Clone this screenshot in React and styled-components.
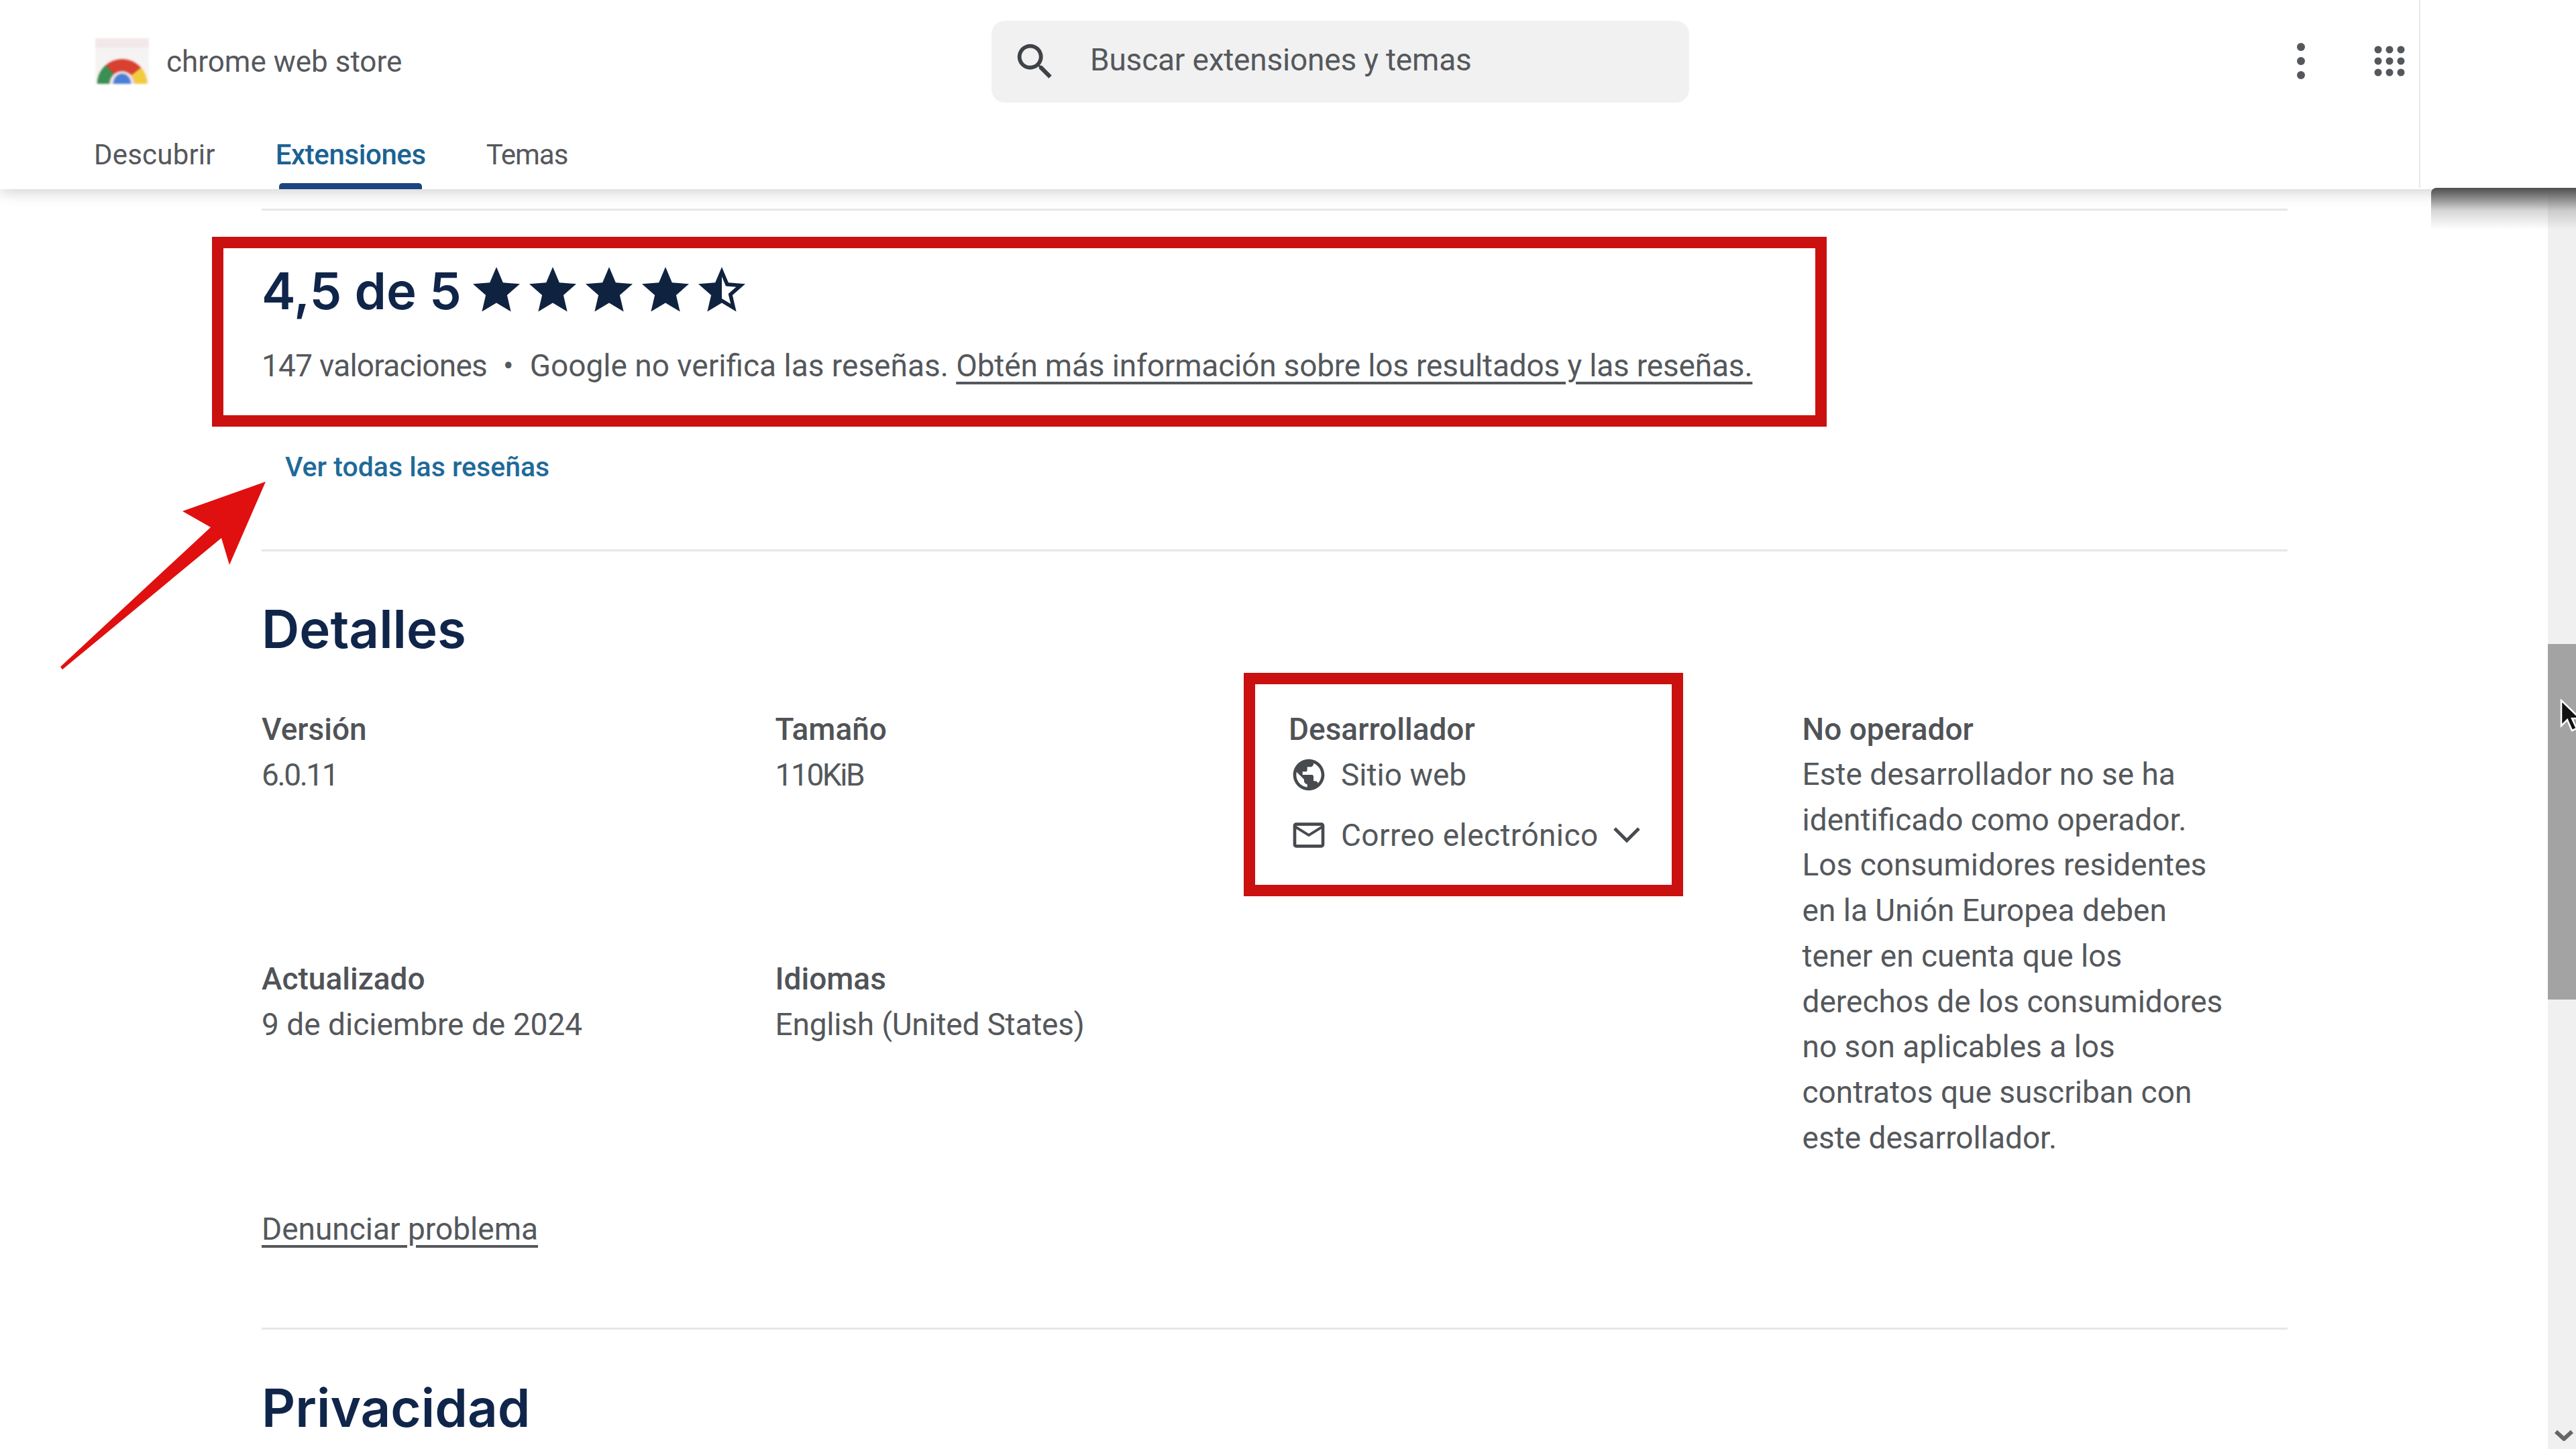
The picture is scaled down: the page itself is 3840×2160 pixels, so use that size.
import styled, { createGlobalStyle } from 'styled-components'

const GlobalStyle = createGlobalStyle`
html, body {
  margin: 0;
  padding: 0;
  background: #fff;
  overflow: hidden;
}
* { box-sizing: border-box; }
`

const STAR = 'M12 17.27L18.18 21l-1.64-7.03L22 9.24l-7.19-.61L12 2 9.19 8.63 2 9.24l5.46 4.73L5.82 21z'
const STAR_HALF = 'M22 9.24l-7.19-.62L12 2 9.19 8.63 2 9.24l5.46 4.73L5.82 21 12 17.27 18.18 21l-1.63-7.03L22 9.24zM12 15.4V6.1l1.71 4.04 4.38.38-3.32 2.88 1 4.28L12 15.4z'
const GLOBE = 'M12 2C6.48 2 2 6.48 2 12s4.48 10 10 10 10-4.48 10-10S17.52 2 12 2zm-1 17.93c-3.95-.49-7-3.85-7-7.93 0-.62.08-1.21.21-1.79L9 15v1c0 1.1.9 2 2 2v1.93zm6.9-2.54c-.26-.81-1-1.39-1.9-1.39h-1v-3c0-.55-.45-1-1-1H8v-2h2c.55 0 1-.45 1-1V7h2c1.1 0 2-.9 2-2v-.41c2.93 1.19 5 4.06 5 7.41 0 2.08-.8 3.97-2.1 5.39z'
const MAIL = 'M20 4H4c-1.1 0-1.99.9-1.99 2L2 18c0 1.1.9 2 2 2h16c1.1 0 2-.9 2-2V6c0-1.1-.9-2-2-2zm0 14H4V8l8 5 8-5v10zm-8-7L4 6h16l-8 5z'
const SEARCH = 'M15.5 14h-.79l-.28-.27A6.47 6.47 0 0 0 16 9.5 6.5 6.5 0 1 0 9.5 16c1.61 0 3.09-.59 4.23-1.57l.27.28v.79l5 4.99L20.49 19l-4.99-5zm-6 0C7.01 14 5 11.99 5 9.5S7.01 5 9.5 5 14 7.01 14 9.5 11.99 14 9.5 14z'

const Logo = () => (
    <LogoSvg viewBox="0 0 84 74">
        <path d="M2 2h80v68H2z" fill="#f6f3f3" />
        <path d="M2 2h80v14H2z" fill="#f2e8ea" />
        <path d="M5 70a37 37 0 0 1 74 0z" fill="#d8402f" />
        <path d="M5 70a37 37 0 0 1 13-28l12 14a18 18 0 0 0-7 14z" fill="#3a8f52" />
        <path d="M79 70a37 37 0 0 0-9-24l-14 11a18 18 0 0 1 5 13z" fill="#f2cc3c" />
        <path d="M23 70a19 19 0 0 1 38 0z" fill="#ecdfe6" />
        <path d="M29 70a13 15 0 0 1 26 0z" fill="#4a7fd6" />
    </LogoSvg>
)

const Icon = ({ d, size, color }) => (
    <svg width={size} height={size} viewBox="0 0 24 24" fill={color}><path d={d} /></svg>
)

const App = () => {
    return (
        <Page>
            <GlobalStyle />
            <Main>
                <Header>
                    <TopRow>
                        <Brand>
                            <Logo />
                            <BrandName>chrome web store</BrandName>
                        </Brand>
                        <SearchBox>
                            <Icon d={SEARCH} size={70} color="#3f4246" />
                            <SearchText>Buscar extensiones y temas</SearchText>
                        </SearchBox>
                        <Actions>
                            <svg width="14" height="56" viewBox="0 0 14 56" fill="#54575b">
                                <circle cx="7" cy="7" r="6" />
                                <circle cx="7" cy="28" r="6" />
                                <circle cx="7" cy="49" r="6" />
                            </svg>
                            <svg width="46" height="46" viewBox="0 0 46 46" fill="#54575b">
                                {[6, 23, 40].map(y => [6, 23, 40].map(x => (
                                    <circle key={`${x}-${y}`} cx={x} cy={y} r="5.5" />
                                )))}
                            </svg>
                        </Actions>
                    </TopRow>
                    <Tabs>
                        <Tab $spacing="0.2px">Descubrir</Tab>
                        <Tab $active $spacing="-0.4px">Extensiones<Indicator /></Tab>
                        <Tab $spacing="-1px">Temas</Tab>
                    </Tabs>
                </Header>
                <Content>
                    <Divider $top="29px" />
                    <RatingRow>
                        <RatingTitle>4,5 de 5</RatingTitle>
                        <Stars>
                            <Icon d={STAR} size={84} color="#0f2340" />
                            <Icon d={STAR} size={84} color="#0f2340" />
                            <Icon d={STAR} size={84} color="#0f2340" />
                            <Icon d={STAR} size={84} color="#0f2340" />
                            <Icon d={STAR_HALF} size={84} color="#0f2340" />
                        </Stars>
                    </RatingRow>
                    <RatingNote>
                        <Count>147 valoraciones</Count><Dot>•</Dot>Google no verifica las reseñas. <TextLink>Obtén más información sobre los resultados y las reseñas.</TextLink>
                    </RatingNote>
                    <AllReviews>Ver todas las reseñas</AllReviews>
                    <Divider $top="93px" />
                    <SectionTitle $top="66px">Detalles</SectionTitle>
                    <DetailsGrid>
                        <Detail>
                            <Label>Versión</Label>
                            <Value $spacing="-2.4px">6.0.11</Value>
                        </Detail>
                        <Detail>
                            <Label>Tamaño</Label>
                            <Value $spacing="-2.4px">110KiB</Value>
                        </Detail>
                        <Detail>
                            <Label>Desarrollador</Label>
                            <IconRow>
                                <Icon d={GLOBE} size={56} color="#474a4e" />
                                <span>Sitio web</span>
                            </IconRow>
                            <IconRow $top="22px">
                                <Icon d={MAIL} size={56} color="#474a4e" />
                                <MailText>Correo electrónico</MailText>
                                <svg width="44" height="28" viewBox="0 0 44 28" fill="none" stroke="#474a4e" strokeWidth="5">
                                    <path d="M4 4l18 18L40 4" />
                                </svg>
                            </IconRow>
                        </Detail>
                        <OperatorDetail>
                            <Label>No operador</Label>
                            <OperatorText>Este desarrollador no se ha identificado como operador. Los consumidores residentes en la Unión Europea deben tener en cuenta que los derechos de los consumidores no son aplicables a los contratos que suscriban con este desarrollador.</OperatorText>
                        </OperatorDetail>
                        <Detail>
                            <Label>Actualizado</Label>
                            <Value>9 de diciembre de 2024</Value>
                        </Detail>
                        <Detail>
                            <Label>Idiomas</Label>
                            <Value $spacing="-0.2px">English (United States)</Value>
                        </Detail>
                    </DetailsGrid>
                    <ReportLink>Denunciar problema</ReportLink>
                    <Divider $top="113px" />
                    <SectionTitle $top="67px">Privacidad</SectionTitle>
                </Content>
            </Main>
            <Scrollbar>
                <Thumb />
                <ScrollArrow viewBox="0 0 28 16" fill="none" stroke="#666" strokeWidth="6">
                    <path d="M2 2l12 11L26 2" />
                </ScrollArrow>
            </Scrollbar>

            <CornerPanel />
            <RedBox $x={316} $y={353} $w={2407} $h={283} />
            <RedBox $x={1854} $y={1003} $w={655} $h={333} />
            <Arrow viewBox="0 0 306 280">
                <path d="M306 0L182 44 224 68 0 276 3 280 240 84 252 124z" fill="#e01010" />
            </Arrow>
            <Cursor viewBox="0 0 32 50">
                <path d="M3 2v38l9-9 7 16 7-3-7-15h12z" fill="#111" stroke="#fff" strokeWidth="2.5" />
            </Cursor>
        </Page>
    )
}

export default App

const Page = styled.div`
position: relative;
display: flex;
width: 3840px;
height: 2160px;
overflow: hidden;
background: #fff;
font-family: Roboto, "Liberation Sans", sans-serif;
color: #54585c;
`
const Main = styled.div`
flex: 1;
display: flex;
flex-direction: column;
min-width: 0;
`
const Header = styled.header`
position: relative;
z-index: 1;
height: 282px;
flex: none;
background: #fff;
box-shadow: 0 3px 22px rgba(0, 0, 0, 0.2);
`
const TopRow = styled.div`
height: 184px;
display: flex;
align-items: center;
padding-left: 140px;
`
const Brand = styled.div`
width: 1338px;
display: flex;
align-items: center;
gap: 24px;
`
const LogoSvg = styled.svg`
width: 84px;
height: 74px;
flex: none;
filter: blur(1.5px);
`
const BrandName = styled.span`
font-size: 44px;
color: #55585c;
`
const SearchBox = styled.div`
width: 1040px;
height: 122px;
display: flex;
align-items: center;
gap: 47px;
padding-left: 30px;
background: #f1f1f1;
border-radius: 20px;
`
const SearchText = styled.span`
padding-bottom: 6px;
font-size: 46px;
letter-spacing: -0.2px;
color: #55585c;
`
const Actions = styled.div`
display: flex;
align-items: center;
gap: 102px;
margin-left: 905px;
padding-bottom: 3px;
`
const Tabs = styled.nav`
display: flex;
padding-left: 140px;
gap: 90px;
`
const Tab = styled.div`
display: flex;
flex-direction: column;
align-items: center;
height: 98px;
padding-top: 21px;
font-size: 42px;
line-height: 52px;
letter-spacing: ${props => props.$spacing};
font-weight: ${props => (props.$active ? 500 : 400)};
color: ${props => (props.$active ? '#1b6293' : '#55585c')};
`
const Indicator = styled.div`
width: 213px;
height: 9px;
margin-top: 16px;
background: #1c4480;
border-radius: 5px 5px 0 0;
`
const Content = styled.main`
width: 3410px;
padding-left: 390px;
`
const Divider = styled.div`
height: 3px;
margin-top: ${props => props.$top};
background: #e6e6e6;
`
const RatingRow = styled.div`
display: flex;
align-items: center;
height: 90px;
margin-top: 74px;
gap: 10px;
`
const RatingTitle = styled.h2`
margin: 0;
font-family: Inter, Roboto, sans-serif;
font-size: 76px;
line-height: 90px;
font-weight: 600;
color: #10254a;
`
const Stars = styled.div`
display: flex;
`
const RatingNote = styled.div`
margin-top: 33px;
font-size: 46px;
line-height: 68px;
`
const Count = styled.span`
letter-spacing: -0.75px;
`
const Dot = styled.span`
margin: 0 24px;
`
const TextLink = styled.span`
letter-spacing: -0.18px;
text-decoration: underline;
text-underline-offset: 8px;
`
const AllReviews = styled.div`
margin-top: 87px;
padding-left: 35px;
font-size: 41px;
line-height: 60px;
font-weight: 500;
color: #1f6a99;
`
const SectionTitle = styled.h2`
margin: ${props => props.$top} 0 0;
font-family: Inter, Roboto, sans-serif;
font-size: 78px;
line-height: 100px;
font-weight: 600;
color: #10254a;
`
const DetailsGrid = styled.div`
display: grid;
grid-template-columns: repeat(4, 765.5px);
grid-template-rows: 372px 361px;
margin-top: 65px;
`
const Detail = styled.div`
font-size: 46px;
line-height: 68px;
`
const OperatorDetail = styled(Detail)`
grid-column: 4;
grid-row: 1 / span 2;
width: 640px;
`
const Label = styled.div`
font-weight: 500;
color: #505357;
`
const Value = styled.div`
letter-spacing: ${props => props.$spacing || 0};
`
const OperatorText = styled.div`
line-height: 67.7px;
`
const IconRow = styled.div`
display: flex;
align-items: center;
gap: 20px;
height: 68px;
margin-top: ${props => props.$top || 0};
padding-left: 2px;
`
const MailText = styled.span`
letter-spacing: 0.4px;
`
const ReportLink = styled.div`
margin-top: 12px;
font-size: 46px;
line-height: 68px;
text-decoration: underline;
text-underline-offset: 8px;
`
const Scrollbar = styled.aside`
width: 42px;
flex: none;
display: flex;
flex-direction: column;
background: #f0f0f0;
`
const Thumb = styled.div`
height: 530px;
margin-top: 960px;
background: #a3a3a3;
`
const ScrollArrow = styled.svg`
width: 28px;
height: 16px;
margin-top: auto;
margin-bottom: 12px;
margin-left: 10px;
`
const CornerPanel = styled.div`
position: absolute;
z-index: 2;
top: 0;
right: 0;
width: 234px;
height: 280px;
background: #fff;
border-left: 2px solid #e9e9e9;

&::after {
    content: '';
    position: absolute;
    top: 100%;
    left: 16px;
    right: 0;
    height: 62px;
    background: linear-gradient(#4f4f4f, rgba(120, 120, 120, 0.3) 55%, rgba(255, 255, 255, 0));
    border-radius: 8px 0 0 0;
}
`
const RedBox = styled.div`
position: absolute;
z-index: 3;
left: ${props => props.$x}px;
top: ${props => props.$y}px;
width: ${props => props.$w}px;
height: ${props => props.$h}px;
border: 17px solid #cb1010;
`
const Arrow = styled.svg`
position: absolute;
z-index: 3;
left: 90px;
top: 718px;
width: 306px;
height: 280px;
`
const Cursor = styled.svg`
position: absolute;
z-index: 4;
left: 3815px;
top: 1042px;
width: 32px;
height: 50px;
`
